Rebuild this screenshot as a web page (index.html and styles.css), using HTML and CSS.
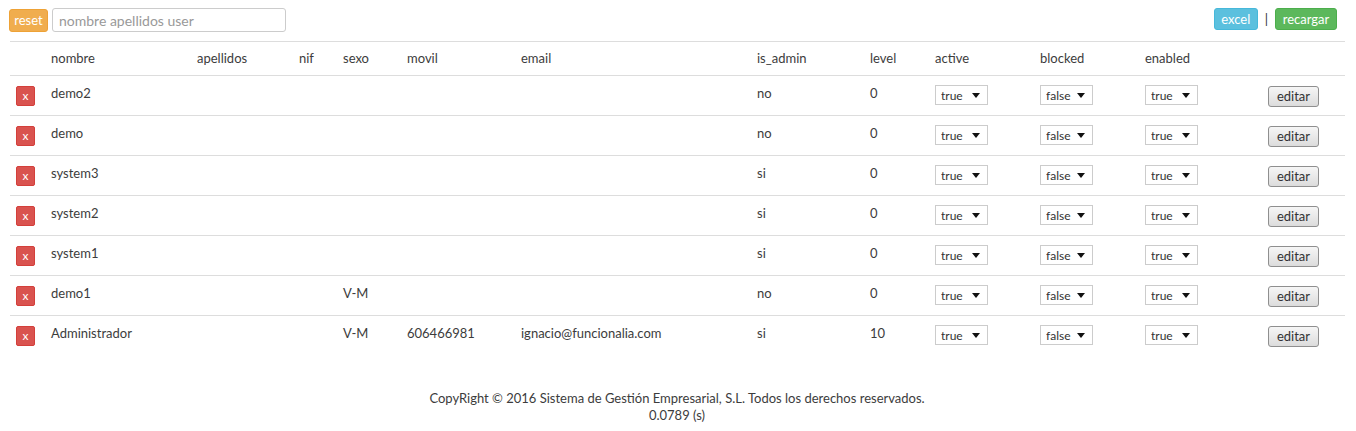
FILE: index.html
```html
<!DOCTYPE html>
<html lang="es">
<head>
<meta charset="utf-8">
<title>Usuarios</title>
<link rel="stylesheet" href="styles.css">
</head>
<body>
<div class="toolbar">
  <div class="search">
    <button class="btn btn-warning">reset</button>
    <input class="search-input" type="text" placeholder="nombre apellidos user">
  </div>
  <div class="actions">
    <button class="btn btn-info">excel</button>
    <span class="sep">|</span>
    <button class="btn btn-success">recargar</button>
  </div>
</div>

<table class="grid">
  <colgroup>
    <col class="c-del"><col class="c-nombre"><col class="c-apellidos"><col class="c-nif"><col class="c-sexo"><col class="c-movil"><col class="c-email"><col class="c-admin"><col class="c-level"><col class="c-active"><col class="c-blocked"><col class="c-enabled"><col class="c-edit">
  </colgroup>
  <thead>
    <tr>
      <th></th><th>nombre</th><th>apellidos</th><th>nif</th><th>sexo</th><th>movil</th><th>email</th><th>is_admin</th><th>level</th><th>active</th><th>blocked</th><th>enabled</th><th></th>
    </tr>
  </thead>
  <tbody>
    <tr>
      <td><button class="del">x</button></td><td>demo2</td><td></td><td></td><td></td><td></td><td></td><td>no</td><td>0</td>
      <td><span class="sel"><select><option>true</option><option>false</option></select></span></td>
      <td><span class="sel"><select><option>false</option><option>true</option></select></span></td>
      <td><span class="sel"><select><option>true</option><option>false</option></select></span></td>
      <td><button class="edit">editar</button></td>
    </tr>
    <tr>
      <td><button class="del">x</button></td><td>demo</td><td></td><td></td><td></td><td></td><td></td><td>no</td><td>0</td>
      <td><span class="sel"><select><option>true</option><option>false</option></select></span></td>
      <td><span class="sel"><select><option>false</option><option>true</option></select></span></td>
      <td><span class="sel"><select><option>true</option><option>false</option></select></span></td>
      <td><button class="edit">editar</button></td>
    </tr>
    <tr>
      <td><button class="del">x</button></td><td>system3</td><td></td><td></td><td></td><td></td><td></td><td>si</td><td>0</td>
      <td><span class="sel"><select><option>true</option><option>false</option></select></span></td>
      <td><span class="sel"><select><option>false</option><option>true</option></select></span></td>
      <td><span class="sel"><select><option>true</option><option>false</option></select></span></td>
      <td><button class="edit">editar</button></td>
    </tr>
    <tr>
      <td><button class="del">x</button></td><td>system2</td><td></td><td></td><td></td><td></td><td></td><td>si</td><td>0</td>
      <td><span class="sel"><select><option>true</option><option>false</option></select></span></td>
      <td><span class="sel"><select><option>false</option><option>true</option></select></span></td>
      <td><span class="sel"><select><option>true</option><option>false</option></select></span></td>
      <td><button class="edit">editar</button></td>
    </tr>
    <tr>
      <td><button class="del">x</button></td><td>system1</td><td></td><td></td><td></td><td></td><td></td><td>si</td><td>0</td>
      <td><span class="sel"><select><option>true</option><option>false</option></select></span></td>
      <td><span class="sel"><select><option>false</option><option>true</option></select></span></td>
      <td><span class="sel"><select><option>true</option><option>false</option></select></span></td>
      <td><button class="edit">editar</button></td>
    </tr>
    <tr>
      <td><button class="del">x</button></td><td>demo1</td><td></td><td></td><td>V-M</td><td></td><td></td><td>no</td><td>0</td>
      <td><span class="sel"><select><option>true</option><option>false</option></select></span></td>
      <td><span class="sel"><select><option>false</option><option>true</option></select></span></td>
      <td><span class="sel"><select><option>true</option><option>false</option></select></span></td>
      <td><button class="edit">editar</button></td>
    </tr>
    <tr>
      <td><button class="del">x</button></td><td>Administrador</td><td></td><td></td><td>V-M</td><td>606466981</td><td>ignacio@funcionalia.com</td><td>si</td><td>10</td>
      <td><span class="sel"><select><option>true</option><option>false</option></select></span></td>
      <td><span class="sel"><select><option>false</option><option>true</option></select></span></td>
      <td><span class="sel"><select><option>true</option><option>false</option></select></span></td>
      <td><button class="edit">editar</button></td>
    </tr>
  </tbody>
</table>

<footer class="footer">
  <p>CopyRight © 2016 Sistema de Gestión Empresarial, S.L. Todos los derechos reservados.</p>
  <p>0.0789 (s)</p>
</footer>
</body>
</html>
```

FILE: styles.css
```css
* { box-sizing: border-box; }

html, body {
  margin: 0;
  padding: 0;
  background: #fff;
}

body {
  font-family: "Lato", "DejaVu Sans", sans-serif;
  font-size: 13px;
  color: #3c3c3c;
  padding: 8px 11px 0 9px;
}

.toolbar {
  display: flex;
  justify-content: space-between;
  align-items: flex-start;
  height: 33px;
}

.search {
  display: flex;
  align-items: center;
  gap: 4px;
}

.actions {
  display: flex;
  align-items: center;
  gap: 7px;
  margin-right: 8px;
}

.btn {
  font-family: inherit;
  font-size: 13px;
  color: #fff;
  border: 1px solid transparent;
  border-radius: 3px;
  padding: 0 6px;
  height: 23px;
  line-height: 21px;
  cursor: pointer;
}

.btn-warning { background: #f0ad4e; border-color: #eea236; width: 39px; padding: 0; }
.btn-info { background: #5bc0de; border-color: #46b8da; height: 22px; width: 44px; padding: 0; }
.btn-success { background: #5cb85c; border-color: #4cae4c; height: 22px; width: 62px; padding: 0; }

.sep {
  color: #333;
  font-size: 13px;
}

.search-input {
  width: 234px;
  height: 24px;
  border: 1px solid #ccc;
  border-radius: 3px;
  padding: 0 6px;
  font-family: inherit;
  font-size: 14px;
  color: #555;
}

.search-input::placeholder { color: #999; }

.grid {
  width: 1335px;
  margin-left: 1px;
  border-collapse: collapse;
  table-layout: fixed;
}

.c-del { width: 35px; }
.c-nombre { width: 146px; }
.c-apellidos { width: 102px; }
.c-nif { width: 44px; }
.c-sexo { width: 64px; }
.c-movil { width: 114px; }
.c-email { width: 236px; }
.c-admin { width: 113px; }
.c-level { width: 65px; }
.c-active { width: 105px; }
.c-blocked { width: 105px; }
.c-enabled { width: 123px; }
.c-edit { width: 83px; }

.grid th {
  font-weight: normal;
  text-align: left;
  padding: 0 6px 1px;
  height: 34px;
  border-top: 1px solid #ddd;
  border-bottom: 1px solid #ddd;
  vertical-align: middle;
}

.grid td {
  padding: 0 6px;
  height: 40px;
  border-top: 1px solid #ddd;
  vertical-align: middle;
  white-space: nowrap;
}

.grid tbody td { padding-bottom: 6px; }
.grid tbody td:first-child,
.grid tbody td:last-child,
.grid tbody td:nth-child(10),
.grid tbody td:nth-child(11),
.grid tbody td:nth-child(12) { padding-bottom: 0; }

.del {
  display: block;
  width: 19px;
  height: 20px;
  padding: 0;
  border: 1px solid #d43f3a;
  border-radius: 2px;
  background: #d9534f;
  color: #fff;
  font-family: inherit;
  font-size: 12px;
  line-height: 17px;
}

.sel {
  position: relative;
  display: inline-block;
  margin-top: -1px;
}

.sel select {
  appearance: none;
  -webkit-appearance: none;
  width: 53px;
  height: 20px;
  border: 1px solid #ccc;
  border-radius: 0;
  background: #fff;
  font-family: inherit;
  font-size: 12px;
  color: #333;
  padding: 0 0 0 5px;
}

.sel::after {
  content: "";
  position: absolute;
  right: 8px;
  top: 8px;
  border-left: 4px solid transparent;
  border-right: 4px solid transparent;
  border-top: 5px solid #111;
  pointer-events: none;
}

.edit {
  display: block;
  width: 51px;
  height: 21px;
  margin-top: 1px;
  padding: 0;
  border: 1px solid #8f8f8f;
  border-radius: 3px;
  background: linear-gradient(#f6f6f6, #dcdcdc);
  font-family: inherit;
  font-size: 13px;
  color: #333;
}

.footer {
  text-align: center;
  margin-top: 34px;
  line-height: 17px;
}

.footer p { margin: 0; }
```
